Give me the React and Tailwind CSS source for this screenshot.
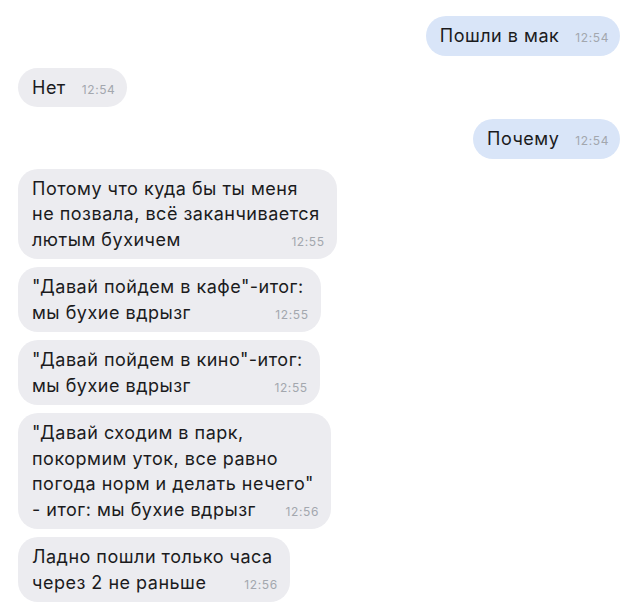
import React from "react";

function Bubble({ lines, time, out = false, className = "" }) {
  const last = lines[lines.length - 1];
  const rest = lines.slice(0, -1);
  return (
    <div className={`flex ${out ? "justify-end" : "justify-start pl-[18px]"} ${className}`}>
      <div
        className={`${out ? "bg-[#d9e5f8] pl-[14px] pr-[11px]" : "bg-[#ececf0] pl-[14px] pr-[12px]"} rounded-[20px] py-[7px] text-[18px] leading-[25.5px] tracking-[0.5px] text-[#1b1b1d]`}
      >
        {rest.map((l, i) => (
          <div key={i} className="whitespace-nowrap pr-[5px]">
            {l}
          </div>
        ))}
        <div className="flex items-baseline whitespace-nowrap h-[25.5px]">
          <span>{last}</span>
          <span className="ml-auto pl-[16px] text-[12px] leading-none tracking-[0.6px] text-[#a3a7ae]">{time}</span>
        </div>
      </div>
    </div>
  );
}

export default function App() {
  return (
    <div className="w-[620px] h-[603px] overflow-hidden bg-white pt-[16px] flex flex-col font-['Inter','Noto_Sans',sans-serif]">
      <Bubble out lines={["Пошли в мак"]} time="12:54" />
      <Bubble className="mt-[12px]" lines={["Нет"]} time="12:54" />
      <Bubble out className="mt-[12px]" lines={["Почему"]} time="12:54" />
      <Bubble
        className="mt-[10px]"
        lines={["Потому что куда бы ты меня", "не позвала, всё заканчивается", "лютым бухичем"]}
        time="12:55"
      />
      <Bubble
        className="mt-[8px]"
        lines={['"Давай пойдем в кафе"-итог:', "мы бухие вдрызг"]}
        time="12:55"
      />
      <Bubble
        className="mt-[8px]"
        lines={['"Давай пойдем в кино"-итог:', "мы бухие вдрызг"]}
        time="12:55"
      />
      <Bubble
        className="mt-[8px]"
        lines={[
          '"Давай сходим в парк,',
          "покормим уток, все равно",
          'погода норм и делать нечего"',
          "- итог: мы бухие вдрызг",
        ]}
        time="12:56"
      />
      <Bubble
        className="mt-[8px]"
        lines={["Ладно пошли только часа", "через 2 не раньше"]}
        time="12:56"
      />
    </div>
  );
}
